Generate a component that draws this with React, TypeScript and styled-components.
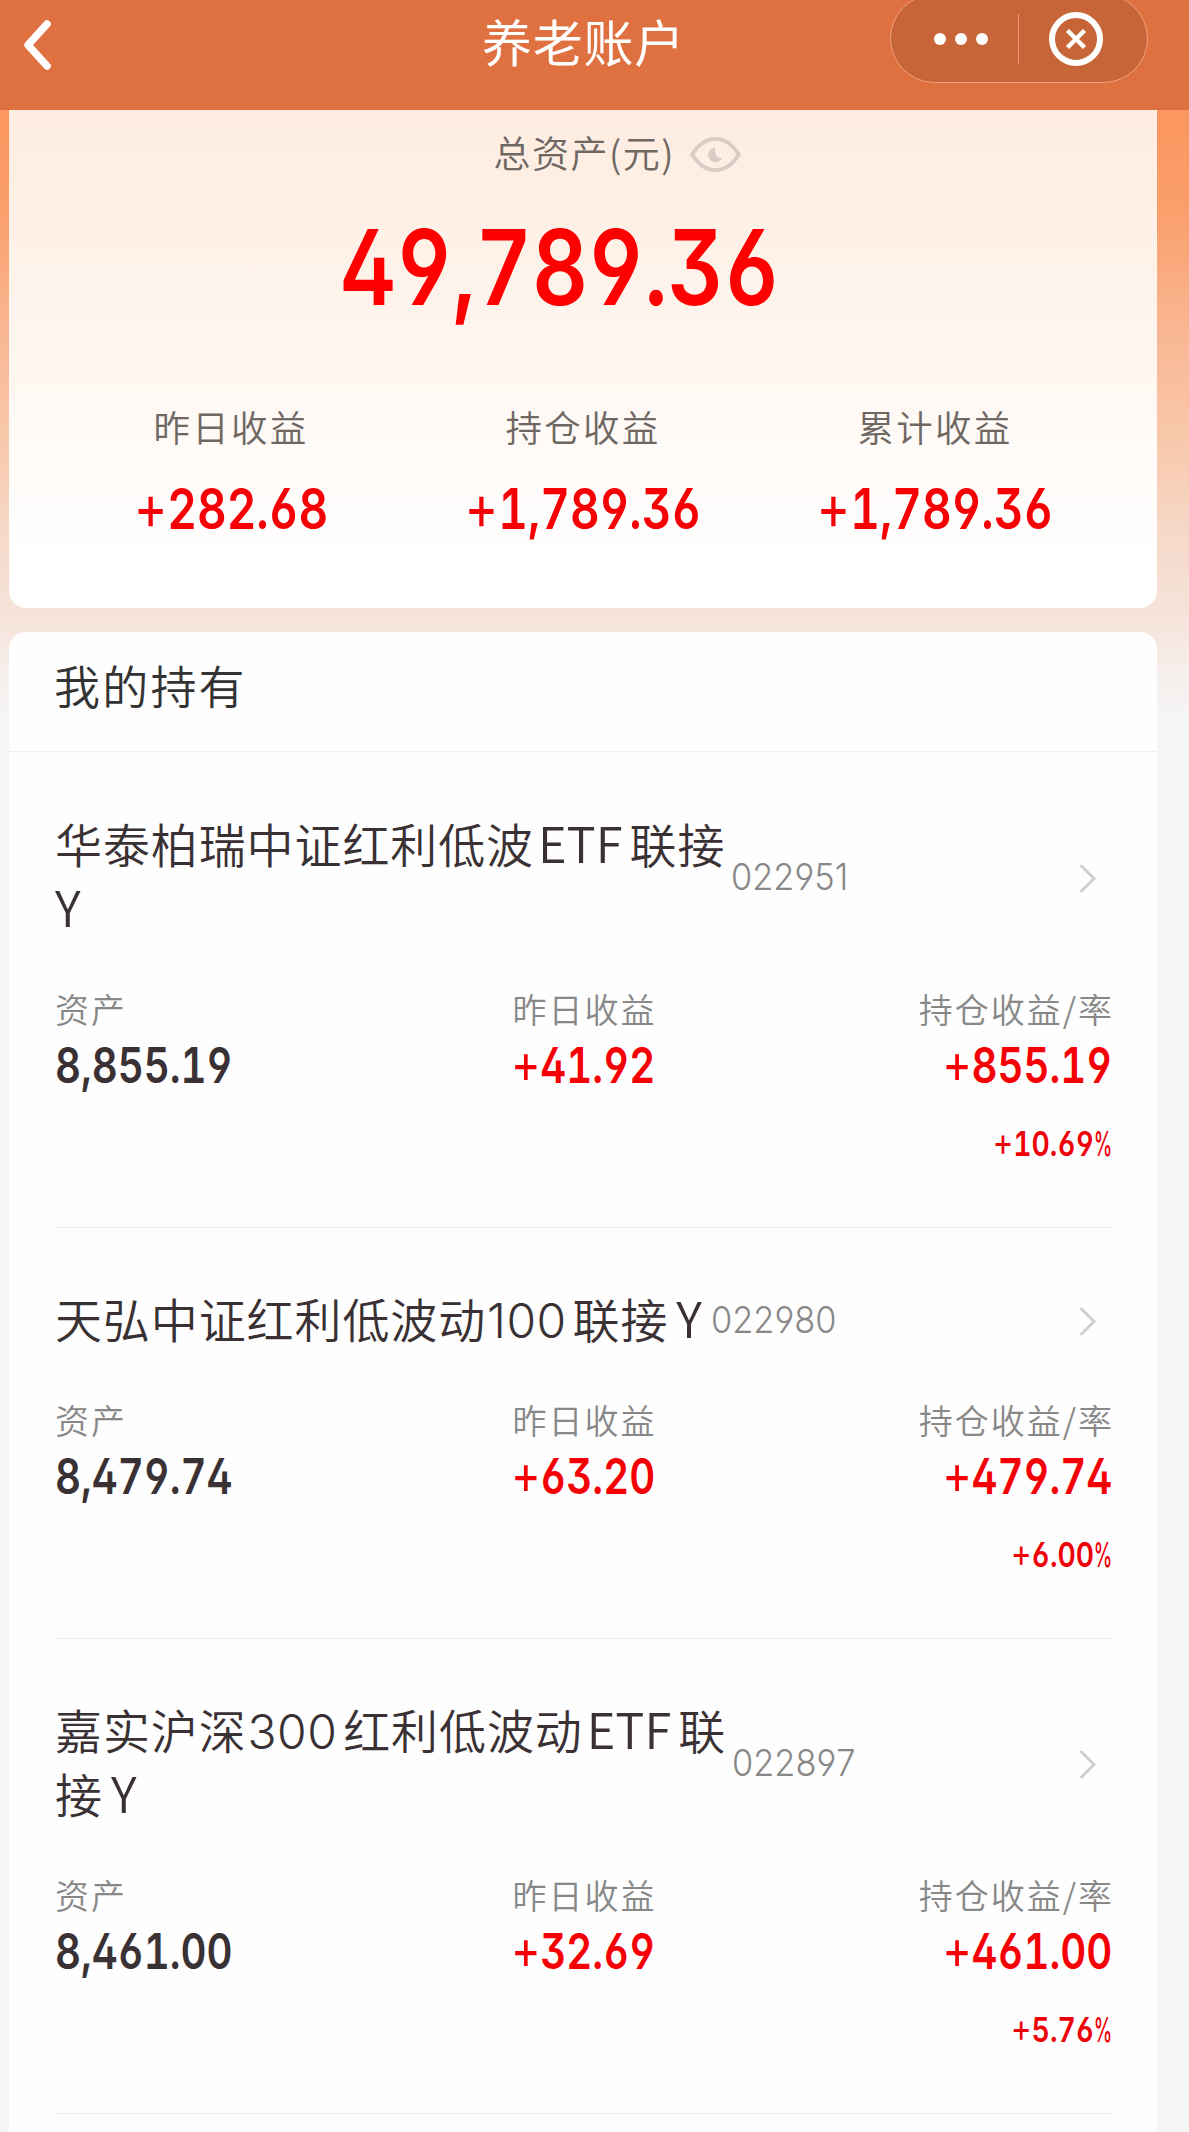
import React from 'react';
import styled, { createGlobalStyle } from 'styled-components';

const cjk = '"Noto Sans CJK SC", "Noto Sans", sans-serif';
const digits = 'Inter, "Noto Sans CJK SC", sans-serif';

const GlobalStyle = createGlobalStyle`
  * { box-sizing: border-box; }
  body { margin: 0; background: #f5f5f5; }
`;

const Page = styled.div`
  width: 1189px;
  height: 2132px;
  overflow: hidden;
  background: linear-gradient(
    180deg,
    #fb9660 110px,
    #fa9d68 200px,
    #f9b692 330px,
    #f8c8ab 440px,
    #f6d8c7 530px,
    #f5e1d7 600px,
    #f6e6de 632px,
    #f5f0ee 680px,
    #f5f5f5 720px
  );
  font-family: ${cjk};
  font-weight: 350;
`;

const TopBar = styled.header`
  display: grid;
  grid-template-columns: 1fr auto 1fr;
  align-items: start;
  height: 110px;
  padding-right: 41px;
  background: #df7141;
`;

const BackIcon = styled.svg`
  display: block;
  width: 36px;
  height: 56px;
  margin: 17px 0 0 19px;
`;

const Title = styled.h1`
  margin: 5px 0 0;
  padding-left: 19px;
  font-size: 50px;
  font-weight: 400;
  line-height: 70px;
  letter-spacing: 0.7px;
  color: #fff;
`;

const Capsule = styled.div`
  justify-self: end;
  display: flex;
  align-items: center;
  width: 258px;
  height: 89px;
  margin-top: -6px;
  border: 1px solid #f0a27c;
  border-radius: 45px;
  background: #c76539;
`;

const Dots = styled.div`
  display: flex;
  justify-content: center;
  gap: 9px;
  width: 127px;
  padding-left: 12px;
`;

const Dot = styled.i`
  width: 12px;
  height: 12px;
  border-radius: 50%;
  background: #fff;
`;

const CapsuleRule = styled.i`
  width: 1px;
  height: 50px;
  background: #e79a75;
`;

const CloseIcon = styled.svg`
  width: 56px;
  height: 56px;
  margin-left: 29px;
`;

const Summary = styled.section`
  width: 1148px;
  height: 498px;
  margin-left: 9px;
  padding: 20px 46px 0;
  border-radius: 0 0 17px 17px;
  background: linear-gradient(180deg, #feece0 0, #fef1e7 120px, #fef6f0 250px, #fffbf8 340px, #fff 460px);
`;

const TotalLabel = styled.div`
  display: flex;
  align-items: center;
  height: 44px;
  margin-left: 438.5px;
  font-size: 37px;
  letter-spacing: 1.5px;
  line-height: 44px;
  white-space: nowrap;
  color: #6f6762;
`;

const EyeIcon = styled.svg`
  width: 53px;
  height: 37px;
  margin: 4px 0 0 14px;
`;

const Amount = styled.div<{ $size: number; $line: number; $from?: string; $color?: string; $narrow?: number }>`
  font-family: ${digits};
  font-feature-settings: 'ss01', 'tnum', 'calt' 0;
  font-kerning: none;
  font-weight: 560;
  font-size: ${(p) => p.$size}px;
  line-height: ${(p) => p.$line}px;
  white-space: nowrap;
  color: ${(p) => p.$color ?? '#f60006'};
  transform: scaleX(${(p) => p.$narrow ?? 0.82});
  transform-origin: ${(p) => p.$from ?? 'center'} center;
`;

const Sign = styled.span`
  font-size: 1.12em;
  font-weight: 400;
  line-height: 0;
`;

const Total = styled.div`
  margin: 43px 46px 0 0;
  text-align: center;
`;

const Earnings = styled.div`
  display: grid;
  grid-template-columns: repeat(3, 1fr);
  margin-top: 88px;
  text-align: center;
`;

const EarningLabel = styled.div`
  margin-bottom: 33px;
  font-size: 36.5px;
  line-height: 44px;
  letter-spacing: 2.3px;
  color: #6f6762;
`;

const Holdings = styled.section`
  width: 1148px;
  height: 1540px;
  margin: 24px 0 0 9px;
  border-radius: 17px 17px 0 0;
  background: #fefefe;
`;

const HoldingsTitle = styled.h2`
  margin: 0 0 1px;
  height: 120px;
  padding: 22px 0 0 45px;
  border-bottom: 1px solid #efefef;
  font-size: 46px;
  font-weight: 350;
  line-height: 60px;
  letter-spacing: 2.2px;
  color: #333;
`;

const Fund = styled.article`
  margin: 0 45px 0 46px;
  padding: 58px 0 65px;
  border-bottom: 1px solid #ebebeb;
`;

const FundHead = styled.div`
  display: flex;
  align-items: center;
`;

const FundName = styled.h3`
  margin: 0;
  font-size: 47px;
  font-weight: 350;
  line-height: 64px;
  letter-spacing: 0.9px;
  white-space: nowrap;
  color: #3a3134;
`;

const Letters = styled.span<{ $before: number; $after: number }>`
  margin: 0 ${(p) => p.$after}px 0 ${(p) => p.$before}px;
  font-size: 49px;
  line-height: 1;
  letter-spacing: 0;
`;

const Digits = styled.span`
  margin: 0 6px 0 1px;
  font-family: ${digits};
  font-size: 48px;
  font-weight: 350;
  line-height: 1;
  letter-spacing: 0.4px;
`;

const Code = styled.span`
  margin: 3px 0 0 6px;
  font-family: ${digits};
  font-feature-settings: 'ss01', 'calt' 0;
  font-kerning: none;
  font-size: 37px;
  font-weight: 350;
  line-height: 40px;
  color: #888;
  transform: scaleX(0.93);
  transform-origin: left center;
`;

const ChevronIcon = styled.svg`
  width: 20px;
  height: 32px;
  margin: 6px 14px 0 auto;
`;

const Stats = styled.div`
  display: grid;
  grid-template-columns: repeat(3, 1fr);
  margin-top: 52px;
`;

const Stat = styled.div<{ $align: string }>`
  text-align: ${(p) => p.$align};
`;

const StatLabel = styled.div`
  margin-bottom: 14px;
  font-size: 34px;
  line-height: 36px;
  letter-spacing: 2px;
  margin-right: -2px;
  color: #888;
`;

const Rate = styled.div`
  margin-top: 35px;
`;

const Percent = styled.span`
  display: inline-block;
  margin-left: -12px;
  font-weight: 450;
  transform: scaleX(0.66);
  transform-origin: right center;
`;

type FundData = {
  lines: string[];
  code: string;
  asset: string;
  day: string;
  hold: string;
  rate: string;
};

const earnings = [
  ['昨日收益', '+282.68'],
  ['持仓收益', '+1,789.36'],
  ['累计收益', '+1,789.36'],
];

const funds: FundData[] = [
  { lines: ['华泰柏瑞中证红利低波ETF联接', 'Y'], code: '022951', asset: '8,855.19', day: '+41.92', hold: '+855.19', rate: '+10.69%' },
  { lines: ['天弘中证红利低波动100联接Y'], code: '022980', asset: '8,479.74', day: '+63.20', hold: '+479.74', rate: '+6.00%' },
  { lines: ['嘉实沪深300红利低波动ETF联', '接Y'], code: '022897', asset: '8,461.00', day: '+32.69', hold: '+461.00', rate: '+5.76%' },
];

type FigureProps = React.ComponentProps<typeof Amount> & { value: string };

function Figure({ value, ...rest }: FigureProps) {
  return (
    <Amount {...rest}>
      {value.startsWith('+') && <Sign>+</Sign>}
      {value.replace(/[+%]/g, '')}
      {value.endsWith('%') && <Percent>%</Percent>}
    </Amount>
  );
}

function NameLine({ text }: { text: string }) {
  return (
    <div>
      {text.split(/([A-Z]+|[0-9]+)/).filter(Boolean).map((part, i) => {
        if (/^[A-Z]/.test(part)) {
          const single = part.length === 1;
          return (
            <Letters key={i} $before={i === 0 ? 0 : single ? 8 : 4} $after={single ? 3 : 7}>
              {part}
            </Letters>
          );
        }
        if (/^[0-9]/.test(part)) return <Digits key={i}>{part}</Digits>;
        return <React.Fragment key={i}>{part}</React.Fragment>;
      })}
    </div>
  );
}

function FundRow({ fund }: { fund: FundData }) {
  return (
    <Fund>
      <FundHead>
        <FundName>{fund.lines.map((l) => <NameLine key={l} text={l} />)}</FundName>
        <Code>{fund.code}</Code>
        <ChevronIcon viewBox="0 0 20 32" fill="none" stroke="#cfcfcf" strokeWidth="3" strokeLinecap="round">
          <path d="M3.5 4 16 16.500 3.500 29" />
        </ChevronIcon>
      </FundHead>
      <Stats>
        <Stat $align="left">
          <StatLabel>资产</StatLabel>
          <Figure $size={49} $line={50} $from="left" $color="#3a3134" value={fund.asset} />
        </Stat>
        <Stat $align="center">
          <StatLabel>昨日收益</StatLabel>
          <Figure $size={49} $line={50} value={fund.day} />
        </Stat>
        <Stat $align="right">
          <StatLabel>持仓收益/率</StatLabel>
          <Figure $size={49} $line={50} $from="right" value={fund.hold} />
          <Rate>
            <Figure $size={34.5} $line={36} $from="right" $color="#ee0008" value={fund.rate} />
          </Rate>
        </Stat>
      </Stats>
    </Fund>
  );
}

export default function App() {
  return (
    <Page>
      <GlobalStyle />
      <TopBar>
        <BackIcon viewBox="0 0 36 56" fill="none" stroke="#fff" strokeWidth="7.5" strokeLinecap="round" strokeLinejoin="round">
          <path d="M28 7 9 28 28 49" />
        </BackIcon>
        <Title>养老账户</Title>
        <Capsule>
          <Dots><Dot /><Dot /><Dot /></Dots>
          <CapsuleRule />
          <CloseIcon viewBox="0 0 56 56" fill="none" stroke="#fff">
            <circle cx="28" cy="28" r="24" strokeWidth="6" />
            <path d="M19.500 19.500 36.500 36.500M36.500 19.500 19.500 36.500" strokeWidth="4.500" />
          </CloseIcon>
        </Capsule>
      </TopBar>
      <Summary>
        <TotalLabel>
          总资产(元)
          <EyeIcon viewBox="0 0 54 38" fill="none" stroke="#d8cdc6" strokeWidth="4" strokeLinejoin="round">
            <path d="M3 19C10 8 18 3 27 3s17 5 24 16c-7 11-15 16-24 16S10 30 3 19Z" />
            <path d="M27 12a7.500 7.500 0 1 0 7 10c-4 1.500-9.500-2-7-10Z" fill="#d8cdc6" stroke="none" />
          </EyeIcon>
        </TotalLabel>
        <Total><Figure $size={104} $line={100} $color="#ff0000" $narrow={0.835} value="49,789.36" /></Total>
        <Earnings>
          {earnings.map(([label, value]) => (
            <div key={label}>
              <EarningLabel>{label}</EarningLabel>
              <Figure $size={56} $line={54} value={value} />
            </div>
          ))}
        </Earnings>
      </Summary>
      <Holdings>
        <HoldingsTitle>我的持有</HoldingsTitle>
        {funds.map((f) => <FundRow key={f.code} fund={f} />)}
      </Holdings>
    </Page>
  );
}
